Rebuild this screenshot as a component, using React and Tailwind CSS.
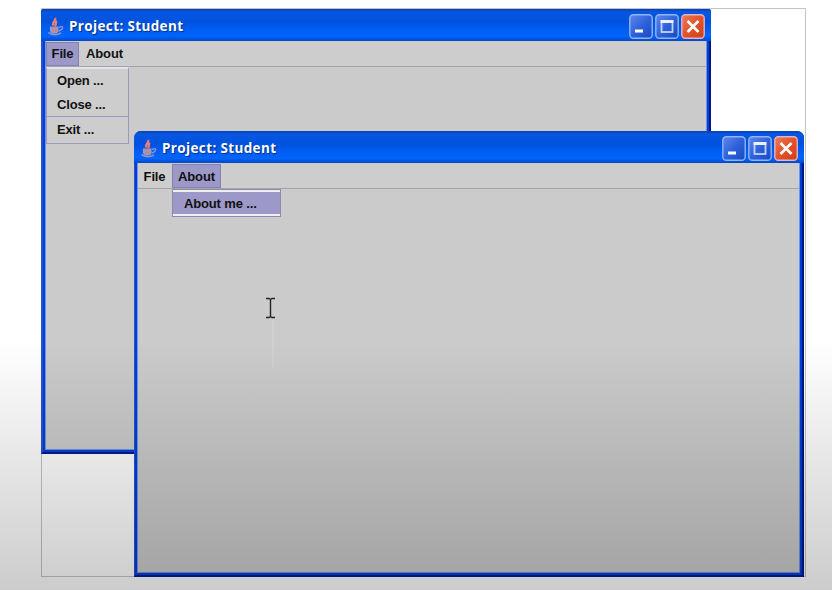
import React from "react";

function JavaCup() {
  return (
    <svg width="18" height="20" viewBox="0 0 18 20" fill="none" className="shrink-0">
      <path d="M8.200 1C9.500 3.500 4.500 5 6.500 8.500M10 4C7.500 6 10 7 8 9" stroke="#ef8172" strokeWidth="2.200" />
      <path d="M3 9.500h8.500v4q0 3-4 3t-4.500-3z" fill="#9a9cc4" />
      <path d="M4 11h6.500M5 13.800h5" stroke="#d9786f" strokeWidth="1.200" />
      <path d="M12 10.500q4-2 3.500.5-.8 2.500-4 3" stroke="#8d93cc" strokeWidth="1.400" />
      <path d="M1.500 15.500q6 4 12.500.5" stroke="#8d93cc" strokeWidth="1.800" />
    </svg>
  );
}

function WindowButton({ kind }) {
  return (
    <svg width="24" height="25" viewBox="0 0 24 25" fill="none">
      <defs>
        <linearGradient id="btnBlue" x1="0" y1="0" x2="1" y2="1">
          <stop offset="0" stopColor="#5f88ee" />
          <stop offset=".5" stopColor="#2f62da" />
          <stop offset="1" stopColor="#1749c4" />
        </linearGradient>
        <linearGradient id="btnRed" x1="0" y1="0" x2="1" y2="1">
          <stop offset="0" stopColor="#ef7a58" />
          <stop offset=".5" stopColor="#e4522a" />
          <stop offset="1" stopColor="#cf3e12" />
        </linearGradient>
      </defs>
      <rect x=".8" y=".8" width="22.400" height="23.400" rx="3.500" fill={kind === "close" ? "url(#btnRed)" : "url(#btnBlue)"} stroke={kind === "close" ? "#e6b3c0" : "#8fb4f8"} strokeWidth="1.400" />
      {kind === "min" && <path d="M6 17h8" stroke="#fff" strokeWidth="3.200" />}
      {kind === "max" && (
        <>
          <rect x="6.500" y="7" width="11" height="11" stroke="#bed2fa" strokeWidth="1.800" />
          <path d="M5.600 7.500h12.800" stroke="#e9f1ff" strokeWidth="3" />
        </>
      )}
      {kind === "close" && <path d="M6.500 7l11 11M17.500 7l-11 11" stroke="#fff" strokeWidth="2.700" />}
    </svg>
  );
}

function TitleBar() {
  return (
    <div className="flex h-[32px] shrink-0 items-center bg-[linear-gradient(180deg,#0a3fae_0%,#0757e2_9%,#0052dd_40%,#005cf2_62%,#0065fc_85%,#0048d0_100%)] pl-[6px] pr-[6px] pt-[3px]">
      <JavaCup />
      <div className="ml-[4px] h-[20px] flex-1 whitespace-nowrap font-['Open_Sans',sans-serif] text-[13.5px] font-bold leading-[19px] tracking-[0.36px] text-white [text-shadow:1px_1px_1px_#062f8b]">
        Project: Student
      </div>
      <div className="flex gap-[2px]">
        <WindowButton kind="min" />
        <WindowButton kind="max" />
        <WindowButton kind="close" />
      </div>
    </div>
  );
}

function MenuBar({ active }) {
  const on = "bg-[#9c98c8] border-[#8583aa]";
  const off = "border-transparent";
  return (
    <div className="flex h-[26px] shrink-0 border-b border-t border-b-[#a5a5a8] border-t-[#d3cbb8] bg-[#cdcdcd]">
      <div className={"flex w-[33px] items-center justify-center border " + (active === "File" ? on : "pt-[1px] " + off)}>File</div>
      <div className={"ml-[1px] flex w-[49px] items-center justify-center border " + (active === "About" ? "pt-[1px] " + on : off)}>About</div>
    </div>
  );
}

function Window({ className, edge, active, children }) {
  return (
    <div className={"absolute flex flex-col overflow-hidden bg-[#0048dc] shadow-[inset_-1px_-1px_0_#001a80] " + className}>
      <TitleBar />
      <div className={"flex flex-1 flex-col border-b-2 border-r-2 border-b-[#001a90] border-l-[#2a50d0] border-r-[#001680] " + edge}>
        <div className="flex flex-1 flex-col border-b-2 border-l-2 border-r-2 border-[#0040d8]">
          <div className="flex flex-1 flex-col border-b border-l border-r border-[#6c96e8] bg-[#cbcbcb]">
            <MenuBar active={active} />
            {children}
          </div>
        </div>
      </div>
    </div>
  );
}

export default function App() {
  return (
    <div className="relative h-[590px] w-[832px] overflow-hidden bg-white font-['Liberation_Sans',Arial,sans-serif] text-[13px] font-bold leading-[16px] tracking-[-0.15px] text-[#111]">
      <div className="absolute left-[41px] top-[8px] h-[569px] w-[765px] border border-[#c4c4c4]" />
      <Window className="left-[41px] top-[9px] h-[445px] w-[670px] rounded-t-[3px]" edge="border-l-2" active="File">
        <div className="flex h-[77px] w-[83px] flex-col border border-t-2 border-[#9c9abb] border-t-[#e3e3ee] bg-[#cdcdcd]">
          <div className="flex h-[24px] items-center pl-[10px]">Open ...</div>
          <div className="flex h-[23px] items-center pl-[10px]">Close ...</div>
          <div className="flex flex-1 items-center border-t border-[#9c9abb] pl-[10px]">Exit ...</div>
        </div>
      </Window>
      <Window className="left-[134px] top-[131px] h-[446px] w-[670px] rounded-t-[7px]" edge="border-l" active="About">
        <div className="ml-[34px] flex h-[28px] w-[109px] items-center border border-[#8d8bad] bg-[#9c98c8] pl-[11px] pt-[2px] shadow-[inset_0_2px_0_#eee,inset_0_-2px_0_#eee]">About me ...</div>
      </Window>
      <svg className="absolute left-[265px] top-[297px]" width="11" height="22" viewBox="0 0 11 22" fill="none" stroke="#222">
        <path d="M1 1.500h3l1.500 1 1.500-1h3M1 20.500h3l1.500-1 1.500 1h3M5.500 2v18" strokeWidth="1.400" />
      </svg>
      <div className="absolute left-[272px] top-[320px] h-[48px] w-[2px] bg-white/10" />
      <div className="absolute inset-x-0 bottom-0 h-[250px] bg-gradient-to-b from-transparent to-black/20" />
    </div>
  );
}
